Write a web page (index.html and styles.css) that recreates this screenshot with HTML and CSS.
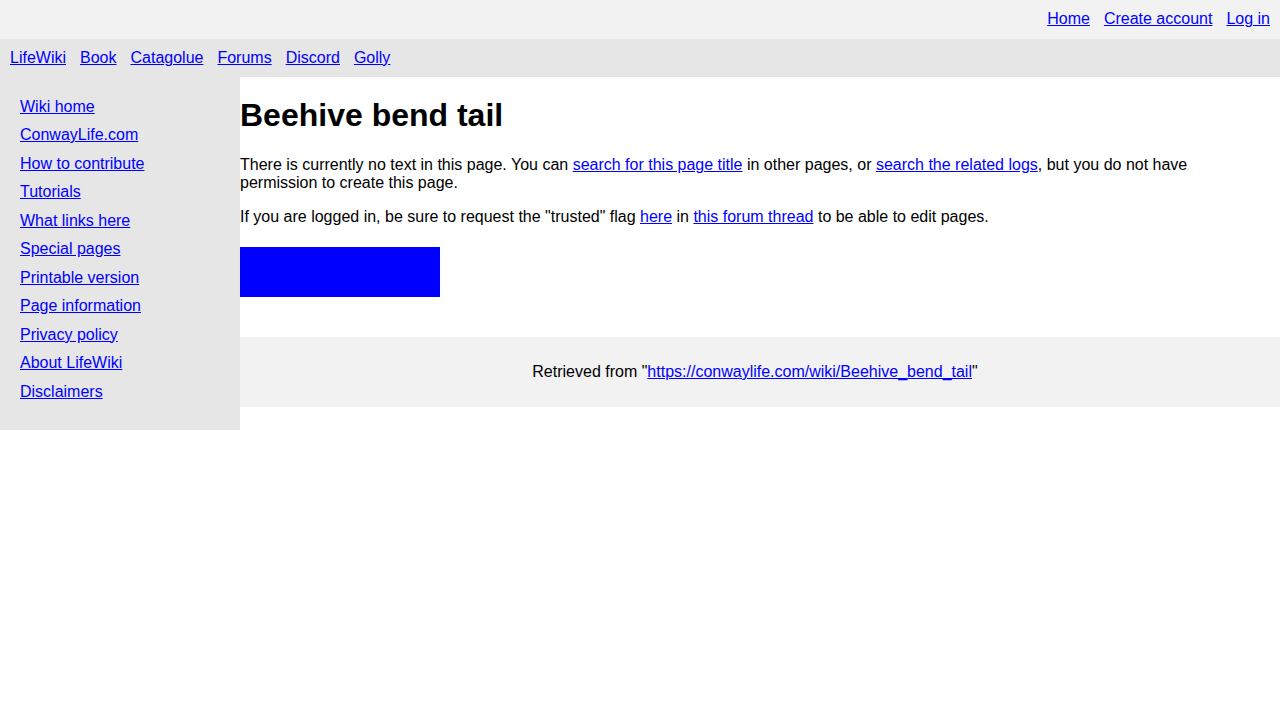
FILE: index.html
```html
<!DOCTYPE html>
<html lang="en">
<head>
<meta charset="utf-8">
<title>Beehive bend tail - LifeWiki</title>
<link rel="stylesheet" href="styles.css">
</head>
<body>
<header class="topbar">
  <nav class="user-links">
    <a href="#">Home</a>
    <a href="#">Create account</a>
    <a href="#">Log in</a>
  </nav>
</header>
<nav class="sitebar">
  <a href="#">LifeWiki</a>
  <a href="#">Book</a>
  <a href="#">Catagolue</a>
  <a href="#">Forums</a>
  <a href="#">Discord</a>
  <a href="#">Golly</a>
</nav>
<div class="layout">
  <aside class="sidebar">
    <ul class="side-list">
      <li><a href="#">Wiki home</a></li>
      <li><a href="#">ConwayLife.com</a></li>
      <li><a href="#">How to contribute</a></li>
      <li><a href="#">Tutorials</a></li>
      <li><a href="#">What links here</a></li>
      <li><a href="#">Special pages</a></li>
      <li><a href="#">Printable version</a></li>
      <li><a href="#">Page information</a></li>
      <li><a href="#">Privacy policy</a></li>
      <li><a href="#">About LifeWiki</a></li>
      <li><a href="#">Disclaimers</a></li>
    </ul>
  </aside>
  <div class="main">
    <main class="content">
      <h1 class="title">Beehive bend tail</h1>
      <p>There is currently no text in this page. You can <a href="#">search for this page title</a> in other pages, or <a href="#">search the related logs</a>, but you do not have permission to create this page.</p>
      <p>If you are logged in, be sure to request the "trusted" flag <a href="#">here</a> in <a href="#">this forum thread</a> to be able to edit pages.</p>
      <div class="blue-box"></div>
    </main>
    <footer class="footer">
      <p class="footer-text">Retrieved from "<a href="#">https://conwaylife.com/wiki/Beehive_bend_tail</a>"</p>
    </footer>
  </div>
</div>
</body>
</html>
```
FILE: styles.css
```css
html, body {
  margin: 0;
  padding: 0;
}
body {
  font-family: "Liberation Sans", Arial, sans-serif;
  font-size: 16px;
  color: #000;
  background: #fff;
}
a {
  color: #0000ff;
}
.topbar {
  background: #f2f2f2;
  height: 39px;
  display: flex;
  justify-content: flex-end;
  align-items: center;
  padding: 0 10px 1px;
  box-sizing: border-box;
}
.user-links {
  display: flex;
  gap: 14px;
}
.sitebar {
  background: #e6e6e6;
  height: 38px;
  display: flex;
  align-items: center;
  gap: 14px;
  padding: 0 10px;
}
.layout {
  display: flex;
  align-items: flex-start;
}
.sidebar {
  width: 240px;
  flex: none;
  background: #e6e6e6;
  padding: 15.5px 20px 24px;
  box-sizing: border-box;
}
.side-list {
  list-style: none;
  margin: 0;
  padding: 0;
}
.side-list li {
  line-height: 28.5px;
}
.main {
  flex: 1;
  display: flex;
  flex-direction: column;
}
.content {
  padding: 0 40px 40px 0;
}
.title {
  font-size: 32px;
  font-weight: bold;
  margin: 20px 0 22px;
}
.content p {
  margin: 16px 0;
}
.blue-box {
  width: 200px;
  height: 50px;
  background: #0000ff;
  margin-top: 21px;
}
.footer {
  background: #f2f2f2;
  height: 70px;
  display: flex;
  align-items: center;
  justify-content: center;
  padding-right: 10px;
}
.footer-text {
  margin: 0;
  text-align: center;
}
```
